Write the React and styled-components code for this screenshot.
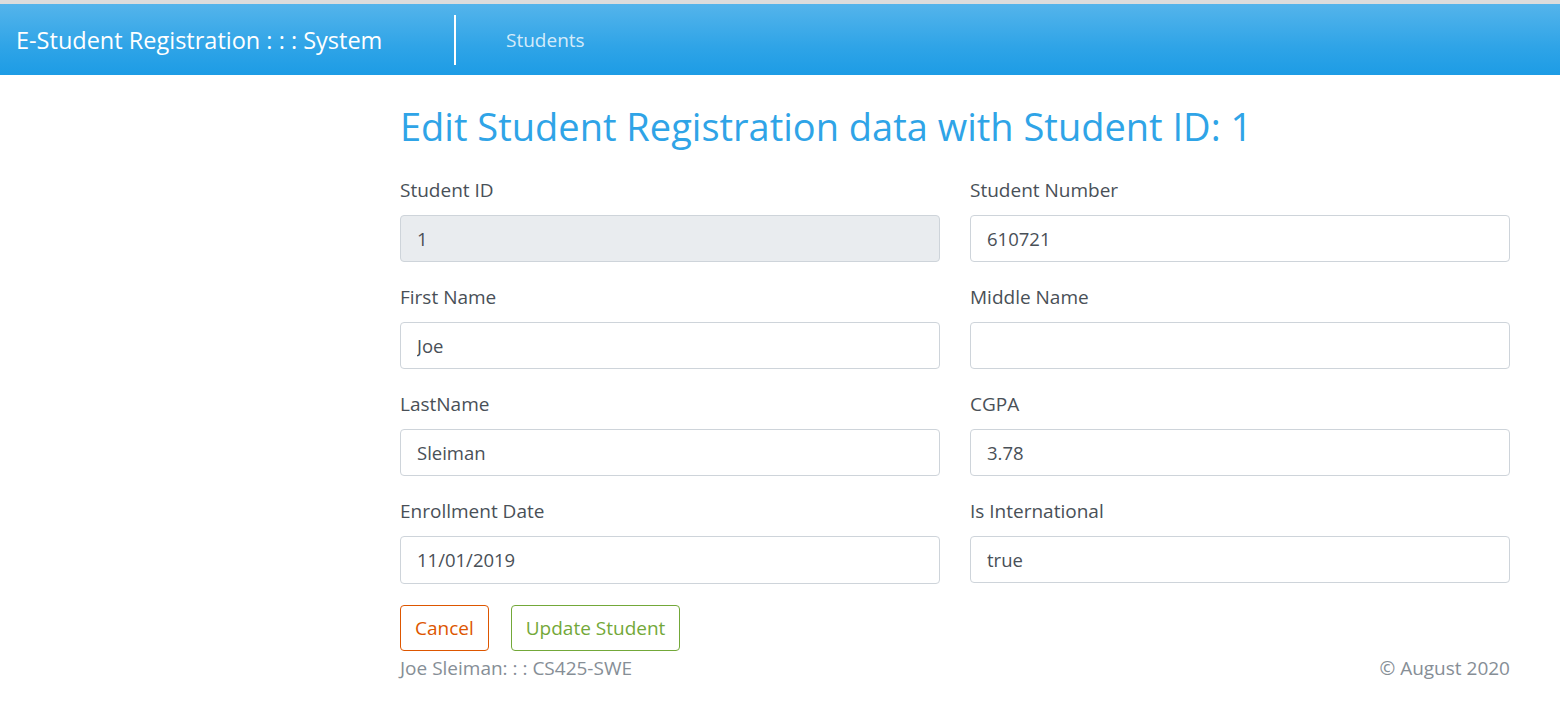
import React from "react";
import styled, { createGlobalStyle } from "styled-components";

const GlobalStyle = createGlobalStyle`
  * { box-sizing: border-box; }
  body {
    margin: 0;
    background: #fff;
    font-family: "Open Sans", "Noto Sans", sans-serif;
    color: #495057;
  }
`;

const TopStrip = styled.div`
  height: 4px;
  background: #dcdcdc;
`;

const Navbar = styled.nav`
  height: 71px;
  display: flex;
  align-items: center;
  padding: 0 16px;
  background-image: linear-gradient(#54b4eb, #2fa4e7 60%, #1d9ce5);
`;

const Brand = styled.div`
  color: #fff;
  font-size: 23.5px;
  width: 438px;
  white-space: nowrap;
  margin-top: 1px;
`;

const Divider = styled.div`
  width: 2px;
  height: 50px;
  background: #fff;
  margin-right: 50px;
`;

const NavLink = styled.a`
  color: rgba(255, 255, 255, 0.8);
  font-size: 19px;
`;

const Main = styled.main`
  width: 1110px;
  margin-left: 400px;
  padding-top: 29px;
`;

const Title = styled.h1`
  margin: 0 0 28px;
  font-size: 38px;
  font-weight: 400;
  color: #2fa4e7;
  line-height: 1.2;
`;

const Grid = styled.div`
  display: grid;
  grid-template-columns: 1fr 1fr;
  column-gap: 30px;
  row-gap: 23px;
`;

const Field = styled.div`
  display: flex;
  flex-direction: column;
`;

const Label = styled.label`
  font-size: 19px;
  line-height: 24px;
  margin-bottom: 13px;
`;

const Input = styled.input`
  height: ${({ $tall }) => ($tall ? "48px" : "47px")};
  padding: 0 16px;
  border: 1px solid #ced4da;
  border-radius: 4px;
  font-family: inherit;
  font-size: 18.5px;
  color: #495057;
  background: ${({ disabled }) => (disabled ? "#e9ecef" : "#fff")};
  outline: none;
`;

const Actions = styled.div`
  display: flex;
  gap: 22px;
  margin-top: 21px;
`;

const Button = styled.button`
  height: 46px;
  padding: 0 14px;
  background: #fff;
  border: 1px solid ${({ $color }) => $color};
  color: ${({ $color }) => $color};
  border-radius: 4px;
  font-family: inherit;
  font-size: 19px;
`;

const Footer = styled.footer`
  display: flex;
  justify-content: space-between;
  color: #868e96;
  font-size: 19px;
  margin-top: 4px;
`;

const fields = [
  ["Student ID", "1", true],
  ["Student Number", "610721"],
  ["First Name", "Joe"],
  ["Middle Name", ""],
  ["LastName", "Sleiman"],
  ["CGPA", "3.78"],
  ["Enrollment Date", "11/01/2019", false, true],
  ["Is International", "true"],
];

export default function App() {
  return (
    <>
      <GlobalStyle />
      <TopStrip />
      <Navbar>
        <Brand>E-Student Registration : : : System</Brand>
        <Divider />
        <NavLink>Students</NavLink>
      </Navbar>
      <Main>
        <Title>Edit Student Registration data with Student ID: 1</Title>
        <Grid>
          {fields.map(([label, value, disabled, tall]) => (
            <Field key={label}>
              <Label>{label}</Label>
              <Input defaultValue={value} disabled={disabled} $tall={tall} />
            </Field>
          ))}
        </Grid>
        <Actions>
          <Button $color="#dd5600">Cancel</Button>
          <Button $color="#73a839">Update Student</Button>
        </Actions>
        <Footer>
          <span>Joe Sleiman: : : CS425-SWE</span>
          <span>© August 2020</span>
        </Footer>
      </Main>
    </>
  );
}
